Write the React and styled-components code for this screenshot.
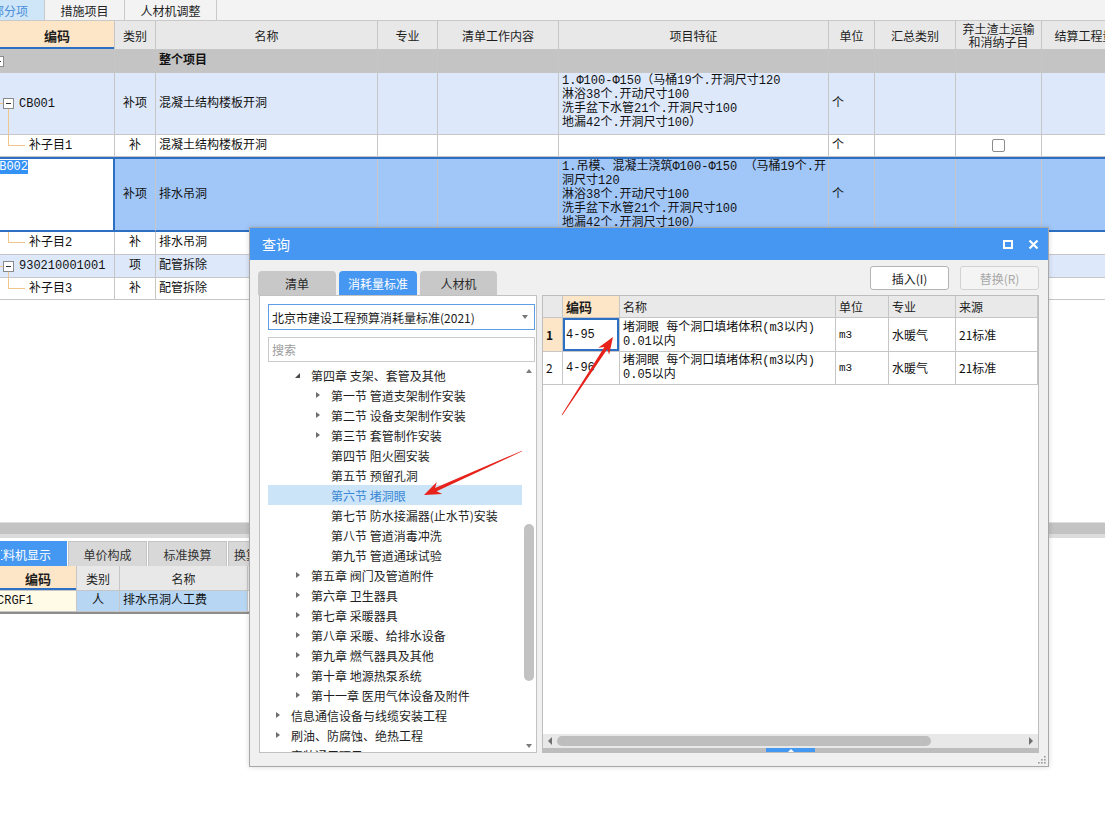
import React from "react";
import styled, { createGlobalStyle, css } from "styled-components";

const SANS = `"Noto Sans CJK SC", "Noto Sans", sans-serif`;
const SONG = `"Liberation Mono", "Noto Sans CJK SC", monospace`;
const GRID = "#c6c6c6";
const SEL = "#2c6fc3";
const TREE_LINE = "#f0c68c";

const GlobalStyle = createGlobalStyle`
  html, body { margin: 0; padding: 0; background: #fff; }
  body { font-family: ${SANS}; font-size: 12px; color: #1a1a1a; }
  * { box-sizing: border-box; }
`;

const Page = styled.div`
  position: relative;
  width: 1105px;
  height: 840px;
  overflow: hidden;
  background: #fff;
  display: flex;
  flex-direction: column;
`;

/* ---------- top tabs ---------- */
const TopTabs = styled.div`
  display: flex;
  flex: none;
  height: 21px;
  background: #f3f3f3;
  border-bottom: 1px solid #c9c9c9;
`;
const TopTab = styled.div`
  display: flex;
  align-items: center;
  justify-content: ${(p) => (p.$clip ? "flex-end" : "center")};
  width: ${(p) => p.$w}px;
  padding-right: ${(p) => (p.$clip ? 16 : 0)}px;
  overflow: hidden;
  white-space: nowrap;
  border-right: 1px solid #c9c9c9;
  font-size: 12px;
  color: ${(p) => (p.$active ? "#4a8fd8" : "#222")};
  background: ${(p) => (p.$active ? "#cfe5f8" : "transparent")};
`;

/* ---------- main table ---------- */
const MainPane = styled.div`
  display: flex;
  flex-direction: column;
  height: 522px;
  flex: none;
`;
const MAIN_COLS = "115px 41px 222px 60px 121px 270px 46px 81px 86px 86px";

const TableRow = styled.div`
  display: grid;
  grid-template-columns: ${(p) => p.$cols || MAIN_COLS};
  width: max-content;
  flex: none;
  height: ${(p) => p.$h}px;
  background: ${(p) => p.$bg || "#fff"};
  ${(p) =>
    p.$sel &&
    css`
      border-top: 2px solid ${SEL};
      & > div {
        border-bottom: 2px solid ${SEL};
      }
    `}
`;

const HeadCell = styled.div`
  display: flex;
  align-items: center;
  justify-content: center;
  text-align: center;
  border-right: 1px solid ${GRID};
  border-bottom: 1px solid ${GRID};
  background: ${(p) => (p.$key ? "#fde6c8" : "#e8e8e8")};
  font-family: ${SANS};
  font-size: ${(p) => (p.$key ? 13 : 12)}px;
  line-height: 13px;
  font-weight: ${(p) => (p.$key ? 700 : 400)};
  color: #1e1e1e;
  white-space: pre-line;
  overflow: hidden;
  ${(p) => p.$key && css`box-shadow: inset 0 -2px 0 ${SEL};`}
`;

const Cell = styled.div`
  display: flex;
  align-items: ${(p) => (p.$top ? "flex-start" : "center")};
  justify-content: ${(p) => (p.$center ? "center" : "flex-start")};
  min-width: 0;
  padding: ${(p) => (p.$top ? "1px 3px 0" : "0 3px")};
  border-right: 1px solid ${GRID};
  border-bottom: 1px solid ${GRID};
  background: ${(p) => p.$bg || "transparent"};
  font-family: ${SONG};
  font-size: 12px;
  line-height: 14px;
  font-weight: ${(p) => (p.$bold ? 700 : 400)};
  color: #111;
  white-space: pre;
  overflow: hidden;
`;

const CodeCell = styled(Cell)`
  padding: 0;
  ${(p) => p.$sel && css`border-right: 2px solid ${SEL};`}
`;

const Stub = styled.span`
  flex: none;
  width: 3px;
  height: 1px;
  background: ${TREE_LINE};
`;

const Toggle = styled.span`
  position: relative;
  flex: none;
  width: 11px;
  height: 11px;
  margin-left: ${(p) => p.$x || 0}px;
  border: 1px solid #8a8a8a;
  background: #fff;
  &::before {
    content: "";
    position: absolute;
    left: 2px;
    right: 2px;
    top: 4px;
    height: 1px;
    background: #333;
  }
  &::after {
    content: "";
    position: absolute;
    left: 4px;
    top: 10px;
    height: ${(p) => p.$tail || 0}px;
    border-left: 1px solid ${TREE_LINE};
  }
`;

const Elbow = styled.span`
  flex: none;
  align-self: flex-start;
  width: 17px;
  height: ${(p) => p.$h}px;
  margin-left: 8px;
  margin-right: 4px;
  border-left: 1px solid ${TREE_LINE};
  border-bottom: 1px solid ${TREE_LINE};
`;

const CodeText = styled.span`
  margin-left: ${(p) => (p.$shift != null ? p.$shift : 5)}px;
`;

const EditText = styled.span`
  margin-left: -8px;
  margin-top: 1px;
  background: #3592f5;
  color: #fff;
  line-height: 14px;
`;

const Check = styled.span`
  width: 13px;
  height: 13px;
  border: 1px solid #8c8c8c;
  border-radius: 2px;
  background: #fff;
`;

const Spacer = styled.div`
  flex: 1;
`;

function MainRow({ h, bg, sel, code, codeBg, kind, name, bold, feature, unit, check }) {
  return (
    <TableRow $h={h} $bg={bg} $sel={sel}>
      <CodeCell $bg={codeBg} $sel={sel} $top={sel}>
        {code}
      </CodeCell>
      <Cell $center>{kind}</Cell>
      <Cell $bold={bold}>{name}</Cell>
      <Cell />
      <Cell />
      <Cell $top>{feature}</Cell>
      <Cell>{unit}</Cell>
      <Cell />
      <Cell $center>{check && <Check />}</Cell>
      <Cell />
    </TableRow>
  );
}

/* ---------- splitter & bottom panel ---------- */
const Splitter = styled.div`
  flex: none;
  height: 16px;
  background: #c3c3c3;
  border-top: 1px solid #dedede;
  border-bottom: 4px solid #dcdcdc;
`;

const BottomTabs = styled.div`
  display: flex;
  gap: 1px;
  flex: none;
  height: 25px;
  margin-top: 3px;
`;
const BottomTab = styled.div`
  display: flex;
  align-items: center;
  justify-content: ${(p) => (p.$clip ? "flex-end" : p.$start ? "flex-start" : "center")};
  padding-right: ${(p) => (p.$clip ? 15 : 0)}px;
  padding-left: ${(p) => (p.$start ? 5 : 0)}px;
  width: ${(p) => p.$w}px;
  overflow: hidden;
  white-space: nowrap;
  font-size: 12px;
  color: ${(p) => (p.$active ? "#fff" : "#333")};
  background: ${(p) => (p.$active ? "#4598f2" : "#d8d8d8")};
  border: 1px solid ${(p) => (p.$active ? "#4598f2" : "#c4c4c4")};
  border-bottom: none;
`;

const BOTTOM_COLS = "77px 43px 128px 60px";

const BottomRow = styled(TableRow)`
  border-bottom: 2px solid #8d8d8d;
`;

/* ---------- dialog ---------- */
const Dialog = styled.div`
  position: absolute;
  left: 249px;
  top: 227px;
  width: 800px;
  height: 540px;
  display: flex;
  flex-direction: column;
  background: #f0f0f0;
  border: 1px solid #a8a8a8;
  box-shadow: 0 0 5px rgba(0, 0, 0, 0.16);
  font-family: ${SANS};
  z-index: 2;
`;
const TitleBar = styled.div`
  flex: none;
  height: 32px;
  display: flex;
  align-items: center;
  padding: 0 9px 0 12px;
  background: #4697f1;
  color: #fff;
  font-size: 14px;
`;
const TitleText = styled.div`
  flex: 1;
`;
const TitleBtns = styled.div`
  display: flex;
  align-items: center;
  gap: 15px;
  svg {
    display: block;
  }
`;

const Toolbar = styled.div`
  flex: none;
  height: 35px;
  display: flex;
  justify-content: space-between;
  padding: 0 9px 0 8px;
`;
const DTabs = styled.div`
  display: flex;
  gap: 3px;
  align-self: flex-end;
`;
const DTab = styled.div`
  width: ${(p) => p.$w}px;
  height: 24px;
  display: flex;
  align-items: center;
  justify-content: center;
  border-radius: 4px 4px 0 0;
  font-size: 12px;
  background: ${(p) => (p.$active ? "#4697f1" : "#c8c8c8")};
  color: ${(p) => (p.$active ? "#fff" : "#2a2a2a")};
`;
const Buttons = styled.div`
  display: flex;
  gap: 11px;
  padding-top: 6px;
`;
const Btn = styled.button`
  width: 79px;
  height: 24px;
  padding: 0;
  border-radius: 3px;
  font-family: ${SANS};
  font-size: 12px;
  background: ${(p) => (p.disabled ? "#f4f4f4" : "#fff")};
  color: ${(p) => (p.disabled ? "#a8a8a8" : "#222")};
  border: 1px solid ${(p) => (p.disabled ? "#d2d2d2" : "#b4b4b4")};
`;

const Panels = styled.div`
  flex: none;
  height: 458px;
  display: grid;
  grid-template-columns: 278px 497px;
  gap: 5px;
  padding: 0 9px;
`;

const LeftPanel = styled.div`
  display: flex;
  flex-direction: column;
  min-height: 0;
  background: #fff;
  border: 1px solid #c2c2c2;
  padding: 8px 1px 0 8px;
`;
const Select = styled.div`
  flex: none;
  height: 26px;
  display: flex;
  align-items: center;
  justify-content: space-between;
  padding: 0 6px 0 3px;
  border: 1px solid #5c9fe4;
  font-size: 12px;
  color: #1a1a1a;
`;
const Caret = styled.span`
  width: 0;
  height: 0;
  border-left: 3px solid transparent;
  border-right: 3px solid transparent;
  border-top: 4px solid #777;
`;
const Search = styled.div`
  flex: none;
  height: 25px;
  margin-top: 7px;
  display: flex;
  align-items: center;
  padding-left: 3px;
  border: 1px solid #cacaca;
  color: #9c9c9c;
  font-size: 12px;
`;
const TreeArea = styled.div`
  flex: 1;
  min-height: 0;
  margin-top: 3px;
  display: grid;
  grid-template-columns: 1fr 13px;
`;
const TreeList = styled.div`
  overflow: hidden;
`;
const TreeRow = styled.div`
  display: flex;
  align-items: center;
  height: 20px;
  padding-left: ${(p) => 8 + p.$level * 20}px;
  font-size: 12px;
  white-space: nowrap;
  color: ${(p) => (p.$sel ? "#3a88d6" : "#1e1e1e")};
  background: ${(p) => (p.$sel ? "#cce4f7" : "transparent")};
`;
const Twisty = styled.span`
  flex: none;
  width: 15px;
  display: flex;
  align-items: center;
`;
const Collapsed = styled.span`
  width: 0;
  height: 0;
  border-top: 3.5px solid transparent;
  border-bottom: 3.5px solid transparent;
  border-left: 4px solid #6e6e6e;
`;
const Expanded = styled.span`
  width: 0;
  height: 0;
  margin-left: -1px;
  border-left: 5px solid transparent;
  border-bottom: 5px solid #4a4a4a;
`;

const VScroll = styled.div`
  display: flex;
  flex-direction: column;
  align-items: center;
`;
const ScrollBtn = styled.div`
  flex: none;
  height: 12px;
  width: 100%;
  display: flex;
  align-items: center;
  justify-content: center;
`;
const TriUp = styled.span`
  width: 0;
  height: 0;
  border-left: 3.5px solid transparent;
  border-right: 3.5px solid transparent;
  border-bottom: 4px solid #7c7c7c;
`;
const TriDown = styled.span`
  width: 0;
  height: 0;
  border-left: 3.5px solid transparent;
  border-right: 3.5px solid transparent;
  border-top: 4px solid #7c7c7c;
`;
const VTrack = styled.div`
  flex: 1;
  width: 100%;
  display: flex;
  flex-direction: column;
  align-items: center;
`;
const VThumb = styled.div`
  width: 10px;
  margin-top: ${(p) => p.$top}px;
  height: ${(p) => p.$size}px;
  border-radius: 5px;
  background: #c2c2c2;
`;

const RightPanel = styled.div`
  display: flex;
  flex-direction: column;
  min-height: 0;
  background: #fff;
  border: 1px solid #bdbdbd;
`;
const R_COLS = "20px 57px 216px 53px 67px 82px";

const RHead = styled.div`
  display: flex;
  align-items: center;
  padding-left: 3px;
  border-right: 1px solid ${GRID};
  border-bottom: 1px solid ${GRID};
  background: ${(p) => (p.$key ? "#fde6c8" : "#e9e9e9")};
  font-size: ${(p) => (p.$key ? 13 : 12)}px;
  font-weight: ${(p) => (p.$key ? 700 : 400)};
  color: #1e1e1e;
`;
const RCell = styled.div`
  display: flex;
  align-items: center;
  min-width: 0;
  padding-left: 3px;
  border-right: 1px solid ${GRID};
  border-bottom: 1px solid ${GRID};
  background: ${(p) => p.$bg || "transparent"};
  font-family: ${(p) => (p.$sans ? SANS : SONG)};
  font-size: ${(p) => p.$size || 12}px;
  font-weight: ${(p) => (p.$bold ? 700 : 400)};
  line-height: 14px;
  white-space: pre;
  overflow: hidden;
  color: #111;
  ${(p) => p.$focus && css`box-shadow: inset 0 0 0 2px ${SEL};`}
`;

const HScroll = styled.div`
  flex: none;
  height: 14px;
  display: grid;
  grid-template-columns: 14px 1fr 14px;
  align-items: center;
  background: #e8e8e8;
`;
const TriLeft = styled.span`
  justify-self: center;
  width: 0;
  height: 0;
  border-top: 4px solid transparent;
  border-bottom: 4px solid transparent;
  border-right: 4px solid #707070;
`;
const TriRight = styled.span`
  justify-self: center;
  width: 0;
  height: 0;
  border-top: 4px solid transparent;
  border-bottom: 4px solid transparent;
  border-left: 4px solid #707070;
`;
const HThumb = styled.div`
  width: ${(p) => p.$size}px;
  height: 10px;
  border-radius: 5px;
  background: #bebebe;
`;
const Strip = styled.div`
  flex: none;
  height: 4px;
  display: flex;
  justify-content: center;
  background: #bdbdbd;
`;
const StripHandle = styled.div`
  width: 49px;
  display: flex;
  align-items: center;
  justify-content: center;
  background: #4598f2;
`;
const StripTri = styled.span`
  width: 0;
  height: 0;
  border-left: 3px solid transparent;
  border-right: 3px solid transparent;
  border-bottom: 3px solid #fff;
`;
const Footer = styled.div`
  flex: 1;
  display: flex;
  justify-content: flex-end;
  align-items: center;
  padding-right: 2px;
`;

const Overlay = styled.svg`
  position: absolute;
  left: 0;
  top: 0;
  width: 1105px;
  height: 840px;
  pointer-events: none;
  z-index: 3;
`;

function Arrow({ x1, y1, x2, y2 }) {
  const dx = x2 - x1;
  const dy = y2 - y1;
  const L = Math.hypot(dx, dy);
  const ux = dx / L;
  const uy = dy / L;
  const nx = -uy;
  const ny = ux;
  const head = 17;
  const hw = 6.5;
  const sw = 1.8;
  const tw = 0.3;
  const bx = x2 - ux * head;
  const by = y2 - uy * head;
  const kx = bx + ux * 4;
  const ky = by + uy * 4;
  const p = (x, y) => `${x.toFixed(1)},${y.toFixed(1)}`;
  const pts = [
    p(x1 + nx * tw, y1 + ny * tw),
    p(kx + nx * sw, ky + ny * sw),
    p(bx + nx * hw, by + ny * hw),
    p(x2, y2),
    p(bx - nx * hw, by - ny * hw),
    p(kx - nx * sw, ky - ny * sw),
    p(x1 - nx * tw, y1 - ny * tw),
  ].join(" ");
  return <polygon points={pts} fill="#e6221b" />;
}

const tree = [
  { l: 1, t: "第四章 支架、套管及其他", s: "open" },
  { l: 2, t: "第一节 管道支架制作安装", s: "closed" },
  { l: 2, t: "第二节 设备支架制作安装", s: "closed" },
  { l: 2, t: "第三节 套管制作安装", s: "closed" },
  { l: 2, t: "第四节 阻火圈安装" },
  { l: 2, t: "第五节 预留孔洞" },
  { l: 2, t: "第六节 堵洞眼", sel: true },
  { l: 2, t: "第七节 防水接漏器(止水节)安装" },
  { l: 2, t: "第八节 管道消毒冲洗" },
  { l: 2, t: "第九节 管道通球试验" },
  { l: 1, t: "第五章 阀门及管道附件", s: "closed" },
  { l: 1, t: "第六章 卫生器具", s: "closed" },
  { l: 1, t: "第七章 采暖器具", s: "closed" },
  { l: 1, t: "第八章 采暖、给排水设备", s: "closed" },
  { l: 1, t: "第九章 燃气器具及其他", s: "closed" },
  { l: 1, t: "第十章 地源热泵系统", s: "closed" },
  { l: 1, t: "第十一章 医用气体设备及附件", s: "closed" },
  { l: 0, t: "信息通信设备与线缆安装工程", s: "closed" },
  { l: 0, t: "刷油、防腐蚀、绝热工程", s: "closed" },
  { l: 0, t: "安装通用项目", s: "closed" },
];

const quotaRows = [
  { n: "1", code: "4-95", name: "堵洞眼 每个洞口填堵体积(m3以内)\n0.01以内", h: 34, active: true },
  { n: "2", code: "4-96", name: "堵洞眼 每个洞口填堵体积(m3以内)\n0.05以内", h: 33 },
];

const F1 = "1.Φ100-Φ150（马桶19个.开洞尺寸120\n淋浴38个.开动尺寸100\n洗手盆下水管21个.开洞尺寸100\n地漏42个.开洞尺寸100）";
const F2 = "1.吊模、混凝土浇筑Φ100-Φ150 （马桶19个.开\n洞尺寸120\n淋浴38个.开动尺寸100\n洗手盆下水管21个.开洞尺寸100\n地漏42个.开洞尺寸100）";

export default function App() {
  return (
    <Page>
      <GlobalStyle />
      <MainPane>
        <TopTabs>
          <TopTab $w={45} $active $clip>
            分部分项
          </TopTab>
          <TopTab $w={80}>措施项目</TopTab>
          <TopTab $w={92}>人材机调整</TopTab>
        </TopTabs>

        <TableRow $h={29}>
          <HeadCell $key>编码</HeadCell>
          <HeadCell>类别</HeadCell>
          <HeadCell>名称</HeadCell>
          <HeadCell>专业</HeadCell>
          <HeadCell>清单工作内容</HeadCell>
          <HeadCell>项目特征</HeadCell>
          <HeadCell>单位</HeadCell>
          <HeadCell>汇总类别</HeadCell>
          <HeadCell>{"弃土渣土运输\n和消纳子目"}</HeadCell>
          <HeadCell>结算工程量</HeadCell>
        </TableRow>

        <MainRow h={23} bg="#c4c4c4" code={<Toggle $x={-7} />} name="整个项目" bold />
        <MainRow
          h={62}
          bg="#dde8fa"
          code={
            <>
              <Stub />
              <Toggle $tail={26} />
              <CodeText>CB001</CodeText>
            </>
          }
          kind="补项"
          name="混凝土结构楼板开洞"
          feature={F1}
          unit="个"
        />
        <MainRow
          h={22}
          code={
            <>
              <Elbow $h={11} />
              补子目1
            </>
          }
          kind="补"
          name="混凝土结构楼板开洞"
          unit="个"
          check
        />
        <MainRow
          h={75}
          bg="#a1c7f9"
          sel
          codeBg="#fff"
          code={<EditText>CB002</EditText>}
          kind="补项"
          name="排水吊洞"
          feature={F2}
          unit="个"
        />
        <MainRow
          h={23}
          code={
            <>
              <Elbow $h={11} />
              补子目2
            </>
          }
          kind="补"
          name="排水吊洞"
        />
        <MainRow
          h={23}
          bg="#dde8fa"
          code={
            <>
              <Stub />
              <Toggle $tail={7} />
              <CodeText>930210001001</CodeText>
            </>
          }
          kind="项"
          name="配管拆除"
        />
        <MainRow
          h={22}
          code={
            <>
              <Elbow $h={11} />
              补子目3
            </>
          }
          kind="补"
          name="配管拆除"
        />
        <Spacer />
      </MainPane>

      <Splitter />

      <BottomTabs>
        <BottomTab $w={67} $active $clip>
          工料机显示
        </BottomTab>
        <BottomTab $w={79}>单价构成</BottomTab>
        <BottomTab $w={79}>标准换算</BottomTab>
        <BottomTab $w={79} $start>
          换算信息
        </BottomTab>
      </BottomTabs>
      <TableRow $h={25} $cols={BOTTOM_COLS}>
        <HeadCell $key>编码</HeadCell>
        <HeadCell>类别</HeadCell>
        <HeadCell>名称</HeadCell>
        <HeadCell />
      </TableRow>
      <BottomRow $h={23} $cols={BOTTOM_COLS}>
        <CodeCell $bg="#fffbe6">
          <CodeText $shift={-3}>CRGF1</CodeText>
        </CodeCell>
        <Cell $center $bg="#b7d6f3">
          人
        </Cell>
        <Cell $bg="#b7d6f3">排水吊洞人工费</Cell>
        <Cell />
      </BottomRow>

      <Dialog>
        <TitleBar>
          <TitleText>查询</TitleText>
          <TitleBtns>
            <svg width="10" height="9" viewBox="0 0 10 9">
              <rect x="1" y="1" width="8" height="7" fill="none" stroke="#fff" strokeWidth="2" />
            </svg>
            <svg width="11" height="11" viewBox="0 0 11 11">
              <path d="M1.5 1.5L9.5 9.5M9.5 1.5L1.5 9.5" stroke="#fff" strokeWidth="2.2" />
            </svg>
          </TitleBtns>
        </TitleBar>

        <Toolbar>
          <DTabs>
            <DTab $w={78}>清单</DTab>
            <DTab $w={78} $active>
              消耗量标准
            </DTab>
            <DTab $w={77}>人材机</DTab>
          </DTabs>
          <Buttons>
            <Btn>插入(I)</Btn>
            <Btn disabled>替换(R)</Btn>
          </Buttons>
        </Toolbar>

        <Panels>
          <LeftPanel>
            <Select>
              北京市建设工程预算消耗量标准(2021)
              <Caret />
            </Select>
            <Search>搜索</Search>
            <TreeArea>
              <TreeList>
                {tree.map((n) => (
                  <TreeRow key={n.t} $level={n.l} $sel={n.sel}>
                    <Twisty>
                      {n.s === "closed" && <Collapsed />}
                      {n.s === "open" && <Expanded />}
                    </Twisty>
                    {n.t}
                  </TreeRow>
                ))}
              </TreeList>
              <VScroll>
                <ScrollBtn>
                  <TriUp />
                </ScrollBtn>
                <VTrack>
                  <VThumb $top={147} $size={157} />
                </VTrack>
                <ScrollBtn>
                  <TriDown />
                </ScrollBtn>
              </VScroll>
            </TreeArea>
          </LeftPanel>

          <RightPanel>
            <TableRow $h={22} $cols={R_COLS}>
              <RHead />
              <RHead $key>编码</RHead>
              <RHead>名称</RHead>
              <RHead>单位</RHead>
              <RHead>专业</RHead>
              <RHead>来源</RHead>
            </TableRow>
            {quotaRows.map((r) => (
              <TableRow key={r.n} $h={r.h} $cols={R_COLS}>
                <RCell $bg={r.active ? "#fde6c8" : undefined} $bold={r.active} $sans>
                  {r.n}
                </RCell>
                <RCell $focus={r.active}>{r.code}</RCell>
                <RCell>{r.name}</RCell>
                <RCell $size={11}>m3</RCell>
                <RCell $sans>水暖气</RCell>
                <RCell $sans>21标准</RCell>
              </TableRow>
            ))}
            <Spacer />
            <HScroll>
              <TriLeft />
              <HThumb $size={374} />
              <TriRight />
            </HScroll>
            <Strip>
              <StripHandle>
                <StripTri />
              </StripHandle>
            </Strip>
          </RightPanel>
        </Panels>

        <Footer>
          <svg width="9" height="9" viewBox="0 0 9 9">
            {[
              [7, 1],
              [4, 4],
              [7, 4],
              [1, 7],
              [4, 7],
              [7, 7],
            ].map(([x, y]) => (
              <rect key={`${x}-${y}`} x={x} y={y} width="1.6" height="1.6" fill="#9a9a9a" />
            ))}
          </svg>
        </Footer>
      </Dialog>

      <Overlay viewBox="0 0 1105 840">
        <Arrow x1={522} y1={451} x2={424} y2={495} />
        <Arrow x1={562} y1={415} x2={613} y2={337} />
      </Overlay>
    </Page>
  );
}
